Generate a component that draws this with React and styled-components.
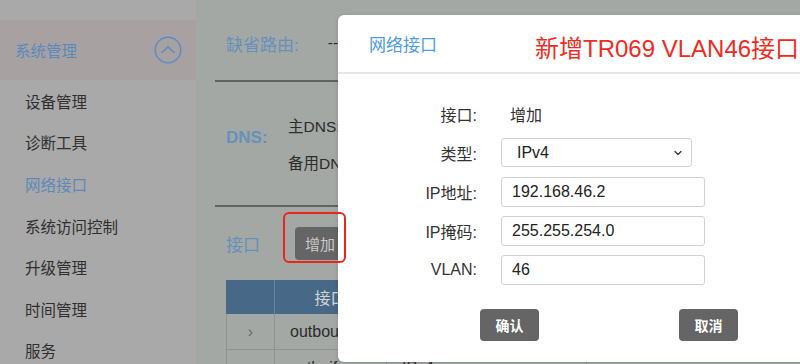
import { Fragment } from "react"
import styled, { createGlobalStyle } from "styled-components"
import { ChevronDown } from "lucide-react"

const GlobalStyle = createGlobalStyle`
  html, body { margin: 0; padding: 0; }
  body {
    font-family: "Liberation Sans", "Noto Sans CJK SC", sans-serif;
    background: #a3a8a4;
    overflow: hidden;
  }
`

const Page = styled.div`
  position: relative;
  width: 800px;
  height: 364px;
  display: flex;
  overflow: hidden;
`

const Sidebar = styled.div`
  width: 196px;
  flex-shrink: 0;
  background: #a9a9a9;
  display: flex;
  flex-direction: column;
  padding-top: 20px;

  & > * { flex-shrink: 0; }
`

const SideHead = styled.div`
  height: 60px;
  background: #a8a1a1;
  display: flex;
  align-items: center;
  justify-content: space-between;
  padding: 0 14px 0 15px;
  color: #5a8abb;
  font-size: 15.5px;
`

const SideItem = styled.div`
  height: 41.6px;
  display: flex;
  align-items: center;
  padding-left: 25px;
  font-size: 15.5px;
  color: ${p => (p.$active ? "#5d89b7" : "#2f2f2f")};
`

const Main = styled.div`
  flex: 1;
  background: #a3a8a4;
  padding-left: 19px;
  display: flex;
  flex-direction: column;

  & > * { flex-shrink: 0; }
`

const Heading = styled.div`
  margin-top: -19px;
  height: 22px;
  line-height: 22px;
  padding-left: 11px;
  font-size: 16px;
  font-weight: bold;
  color: #5b87b6;
`

const RouteRow = styled.div`
  height: 79px;
  padding: 3px 0 0 11px;
  box-sizing: border-box;
  display: flex;
  align-items: center;
  gap: 29px;
  border-bottom: 2px solid #606361;
`

const BlueLabel = styled.span`
  font-size: 17px;
  color: #6790bc;
  font-weight: ${p => (p.$bold ? "bold" : "normal")};
`

const DarkText = styled.span`
  font-size: 15.5px;
  color: #2c2c2c;
  white-space: nowrap;
`

const DnsBlock = styled.div`
  height: 125px;
  box-sizing: border-box;
  display: flex;
  align-items: center;
  padding-left: 11px;
  border-bottom: 2px solid #606361;
`

const DnsLabel = styled(BlueLabel)`
  width: 62px;
  margin-bottom: 11px;
`

const DnsValues = styled.div`
  display: flex;
  flex-direction: column;
  gap: 15px;
`

const IfaceRow = styled.div`
  padding: 20px 0 0 11px;
  display: flex;
  align-items: center;
`

const IfaceTitle = styled(BlueLabel)`
  width: 69px;
`

const GreyButton = styled.button`
  width: ${p => p.$w || 50}px;
  height: ${p => p.$h || 33}px;
  border: none;
  border-radius: 4px;
  background: ${p => p.$bg || "#656565"};
  color: ${p => p.$fg || "#c9c9c9"};
  font-family: inherit;
  font-size: ${p => p.$size || 15}px;
  font-weight: ${p => (p.$bold ? "bold" : "normal")};
  padding: 0;
  flex-shrink: 0;
`

const Table = styled.div`
  margin: 20px 0 0 11px;
  display: grid;
  grid-template-columns: 49px 112px 200px;
`

const HeadCell = styled.div`
  height: 34px;
  background: #486888;
  border-right: 1px solid #6c819a;
  display: flex;
  align-items: center;
  justify-content: center;
  color: #d2d5d8;
  font-size: 16px;
`

const Cell = styled.div`
  height: 36px;
  box-sizing: border-box;
  border: 1px solid #8f9491;
  border-top: none;
  border-left: ${p => (p.$first ? "1px solid #8f9491" : "none")};
  display: flex;
  align-items: center;
  justify-content: ${p => (p.$center ? "center" : "flex-start")};
  padding-left: ${p => (p.$center ? 0 : 15)}px;
  color: ${p => (p.$center ? "#6a6a6a" : "#2c2c2c")};
  font-size: 16px;
  white-space: nowrap;
`

const Mark = styled.div`
  position: absolute;
  left: 283px;
  top: 212px;
  width: 63px;
  height: 51px;
  box-sizing: border-box;
  border: 2px solid #e8261f;
  border-radius: 6px;
  z-index: 3;
`

const Modal = styled.div`
  position: absolute;
  left: 338px;
  top: 15px;
  width: 480px;
  height: 347px;
  background: #fff;
  border-radius: 6px;
  box-shadow: 0 1px 4px rgba(0, 0, 0, 0.15);
  z-index: 2;
  display: flex;
  flex-direction: column;

  & > * { flex-shrink: 0; }
`

const ModalHead = styled.div`
  height: 57px;
  border-bottom: 2px solid #e6e6e6;
  display: flex;
  align-items: center;
  padding-left: 31px;
`

const ModalTitle = styled.span`
  font-size: 17px;
  color: #4f9be4;
  width: 166px;
`

const Note = styled.span`
  font-size: 24px;
  color: #ee2b22;
  margin-top: 6px;
  white-space: nowrap;
`

const Form = styled.div`
  display: grid;
  grid-template-columns: 139px 204px;
  column-gap: 24px;
  row-gap: 10px;
  grid-auto-rows: 29px;
  padding-top: 25px;
  align-items: center;
`

const Label = styled.div`
  text-align: right;
  font-size: 16px;
  color: #333;
  white-space: nowrap;
`

const Value = styled.div`
  font-size: 16px;
  color: #333;
  padding-left: 9px;
`

const SelectBox = styled.div`
  position: relative;
  width: 191px;
  height: 29px;
  box-sizing: border-box;
  border: 1px solid #d2d2d2;
  border-radius: 3px;
  display: flex;
  align-items: center;
  padding-left: 15px;
  font-size: 16px;
  color: #222;

  svg {
    position: absolute;
    right: 7px;
    top: 8px;
  }
`

const Input = styled.input`
  width: 204px;
  height: 30px;
  box-sizing: border-box;
  border: 1px solid #d2d2d2;
  border-radius: 3px;
  padding: 0 0 0 10px;
  font-family: inherit;
  font-size: 16px;
  color: #222;
  outline: none;
`

const ButtonRow = styled.div`
  display: flex;
  gap: 140px;
  padding: 25px 0 0 142px;
`

const ChevronCircle = () => (
  <svg width="28" height="28" viewBox="0 0 28 28">
    <circle cx="14" cy="14" r="12.8" fill="none" stroke="#5b8fc4" strokeWidth="1.5" />
    <path d="M7.5 17 L14 10.8 L20.5 17" fill="none" stroke="#5b8fc4" strokeWidth="1.6" />
  </svg>
)

const menu = ["设备管理", "诊断工具", "网络接口", "系统访问控制", "升级管理", "时间管理", "服务"]

const fields = [
  { label: "IP地址:", value: "192.168.46.2" },
  { label: "IP掩码:", value: "255.255.254.0" },
  { label: "VLAN:", value: "46" },
]

const App = () => {
  return (
    <Page>
      <GlobalStyle />
      <Sidebar>
        <SideHead>
          <span>系统管理</span>
          <ChevronCircle />
        </SideHead>
        {menu.map(m => (
          <SideItem key={m} $active={m === "网络接口"}>{m}</SideItem>
        ))}
      </Sidebar>

      <Main>
        <Heading>上行接口信息</Heading>
        <RouteRow>
          <BlueLabel>缺省路由:</BlueLabel>
          <DarkText>--</DarkText>
        </RouteRow>
        <DnsBlock>
          <DnsLabel $bold>DNS:</DnsLabel>
          <DnsValues>
            <DarkText>主DNS:</DarkText>
            <DarkText>备用DNS:</DarkText>
          </DnsValues>
        </DnsBlock>
        <IfaceRow>
          <IfaceTitle>接口</IfaceTitle>
          <GreyButton>增加</GreyButton>
        </IfaceRow>
        <Table>
          <HeadCell />
          <HeadCell>接口</HeadCell>
          <HeadCell>类型</HeadCell>
          <Cell $first $center>›</Cell>
          <Cell>outbound</Cell>
          <Cell>IPv4</Cell>
          <Cell $first $center>›</Cell>
          <Cell>veth_if</Cell>
          <Cell>IPv4</Cell>
        </Table>
      </Main>

      <Mark />

      <Modal>
        <ModalHead>
          <ModalTitle>网络接口</ModalTitle>
          <Note>新增TR069 VLAN46接口</Note>
        </ModalHead>
        <Form>
          <Label>接口:</Label>
          <Value>增加</Value>
          <Label>类型:</Label>
          <SelectBox>
            IPv4
            <ChevronDown size={12} strokeWidth={2.5} color="#333" />
          </SelectBox>
          {fields.map(f => (
            <Fragment key={f.label}>
              <Label>{f.label}</Label>
              <Input defaultValue={f.value} />
            </Fragment>
          ))}
        </Form>
        <ButtonRow>
          <GreyButton $w={59} $h={32} $fg="#fff" $size={14} $bold>确认</GreyButton>
          <GreyButton $w={59} $h={32} $fg="#fff" $size={14} $bold>取消</GreyButton>
        </ButtonRow>
      </Modal>
    </Page>
  )
}

export default App
